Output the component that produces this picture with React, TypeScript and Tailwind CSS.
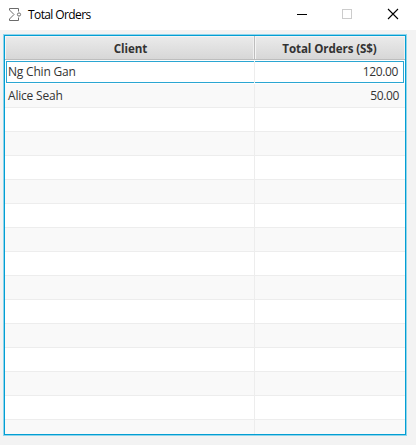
import React from "react";

const rows: { client: string; total: string }[] = [
  { client: "Ng Chin Gan", total: "120.00" },
  { client: "Alice Seah", total: "50.00" },
  ...Array.from({ length: 14 }, () => ({ client: "", total: "" })),
];

function TitleBar() {
  return (
    <div className="flex h-[30px] shrink-0 items-center bg-white">
      <svg className="ml-2 h-4 w-4 shrink-0" viewBox="0 0 16 16" fill="none" stroke="#6b6b6b">
        <path d="M10.5 4.5V1.5H1.5V3L6 7.5L1.5 12V13.5H10.5V10.5" />
        <circle cx="11" cy="7.5" r="1.6" />
      </svg>
      <span className="ml-1 text-[12px] tracking-[-0.6px] text-black">Total Orders</span>
      <svg className="ml-auto h-[30px] w-[138px]" viewBox="0 0 138 30" fill="none" shapeRendering="crispEdges">
        <path d="M19 14.5H29" stroke="#000" />
        <rect x="64.5" y="9.5" width="9" height="9" stroke="#cccccc" />
        <path d="M110 9L120 19M120 9L110 19" stroke="#000" strokeWidth="1.1" shapeRendering="auto" />
      </svg>
    </div>
  );
}

function HeaderCell({ text, className }: { text: string; className: string }) {
  return (
    <div
      className={`flex h-6 items-center justify-center border-b border-[#bdbdbd] bg-linear-to-b from-[#ebebeb] to-[#d7d7d7] pt-0.5 font-bold shadow-[inset_1px_1px_0_#f5f5f5,inset_-1px_0_0_#f0f0f0] ${className}`}
    >
      {text}
    </div>
  );
}

export default function App() {
  return (
    <div className="flex h-[445px] w-[416px] flex-col overflow-hidden bg-[#f3f3f3] font-['Open_Sans','Noto_Sans',sans-serif] text-[12px] leading-[18px] text-[#333333]">
      <TitleBar />
      <div className="mt-1 ml-[3px] h-[402px] w-[404px] border border-[#8fd5ec] bg-[#f9f9f9]">
        <div className="h-[400px] overflow-hidden border border-[#039ed3]">
          <div className="flex text-[11.6px] tracking-[-0.1px]">
            <HeaderCell text="Client" className="w-[250px] border-r border-r-[#bdbdbd] pl-0.5" />
            <HeaderCell text="Total Orders (S$)" className="w-[150px] pr-px" />
          </div>
          {rows.map((row, i) => (
            <div key={i} className={`h-6 ${i % 2 ? "bg-[#f9f9f9]" : "bg-white"} ${i === 0 ? "p-px" : ""}`}>
              <div
                className={
                  i === 0
                    ? "flex h-[22px] w-[398px] border border-[#2ba6d2]"
                    : "flex h-6 border-b border-[#ededed]"
                }
              >
                <div
                  className={`flex items-center border-r border-[#ededed] tracking-[-0.2px] ${i === 0 ? "-my-px w-[248px] pl-px" : "w-[250px] pl-[3px]"}`}
                >
                  {row.client}
                </div>
                <div className={`flex flex-1 items-center justify-end tracking-[-0.35px] ${i === 0 ? "pr-[5px]" : "pr-[6px]"}`}>
                  {row.total}
                </div>
              </div>
            </div>
          ))}
        </div>
      </div>
    </div>
  );
}
